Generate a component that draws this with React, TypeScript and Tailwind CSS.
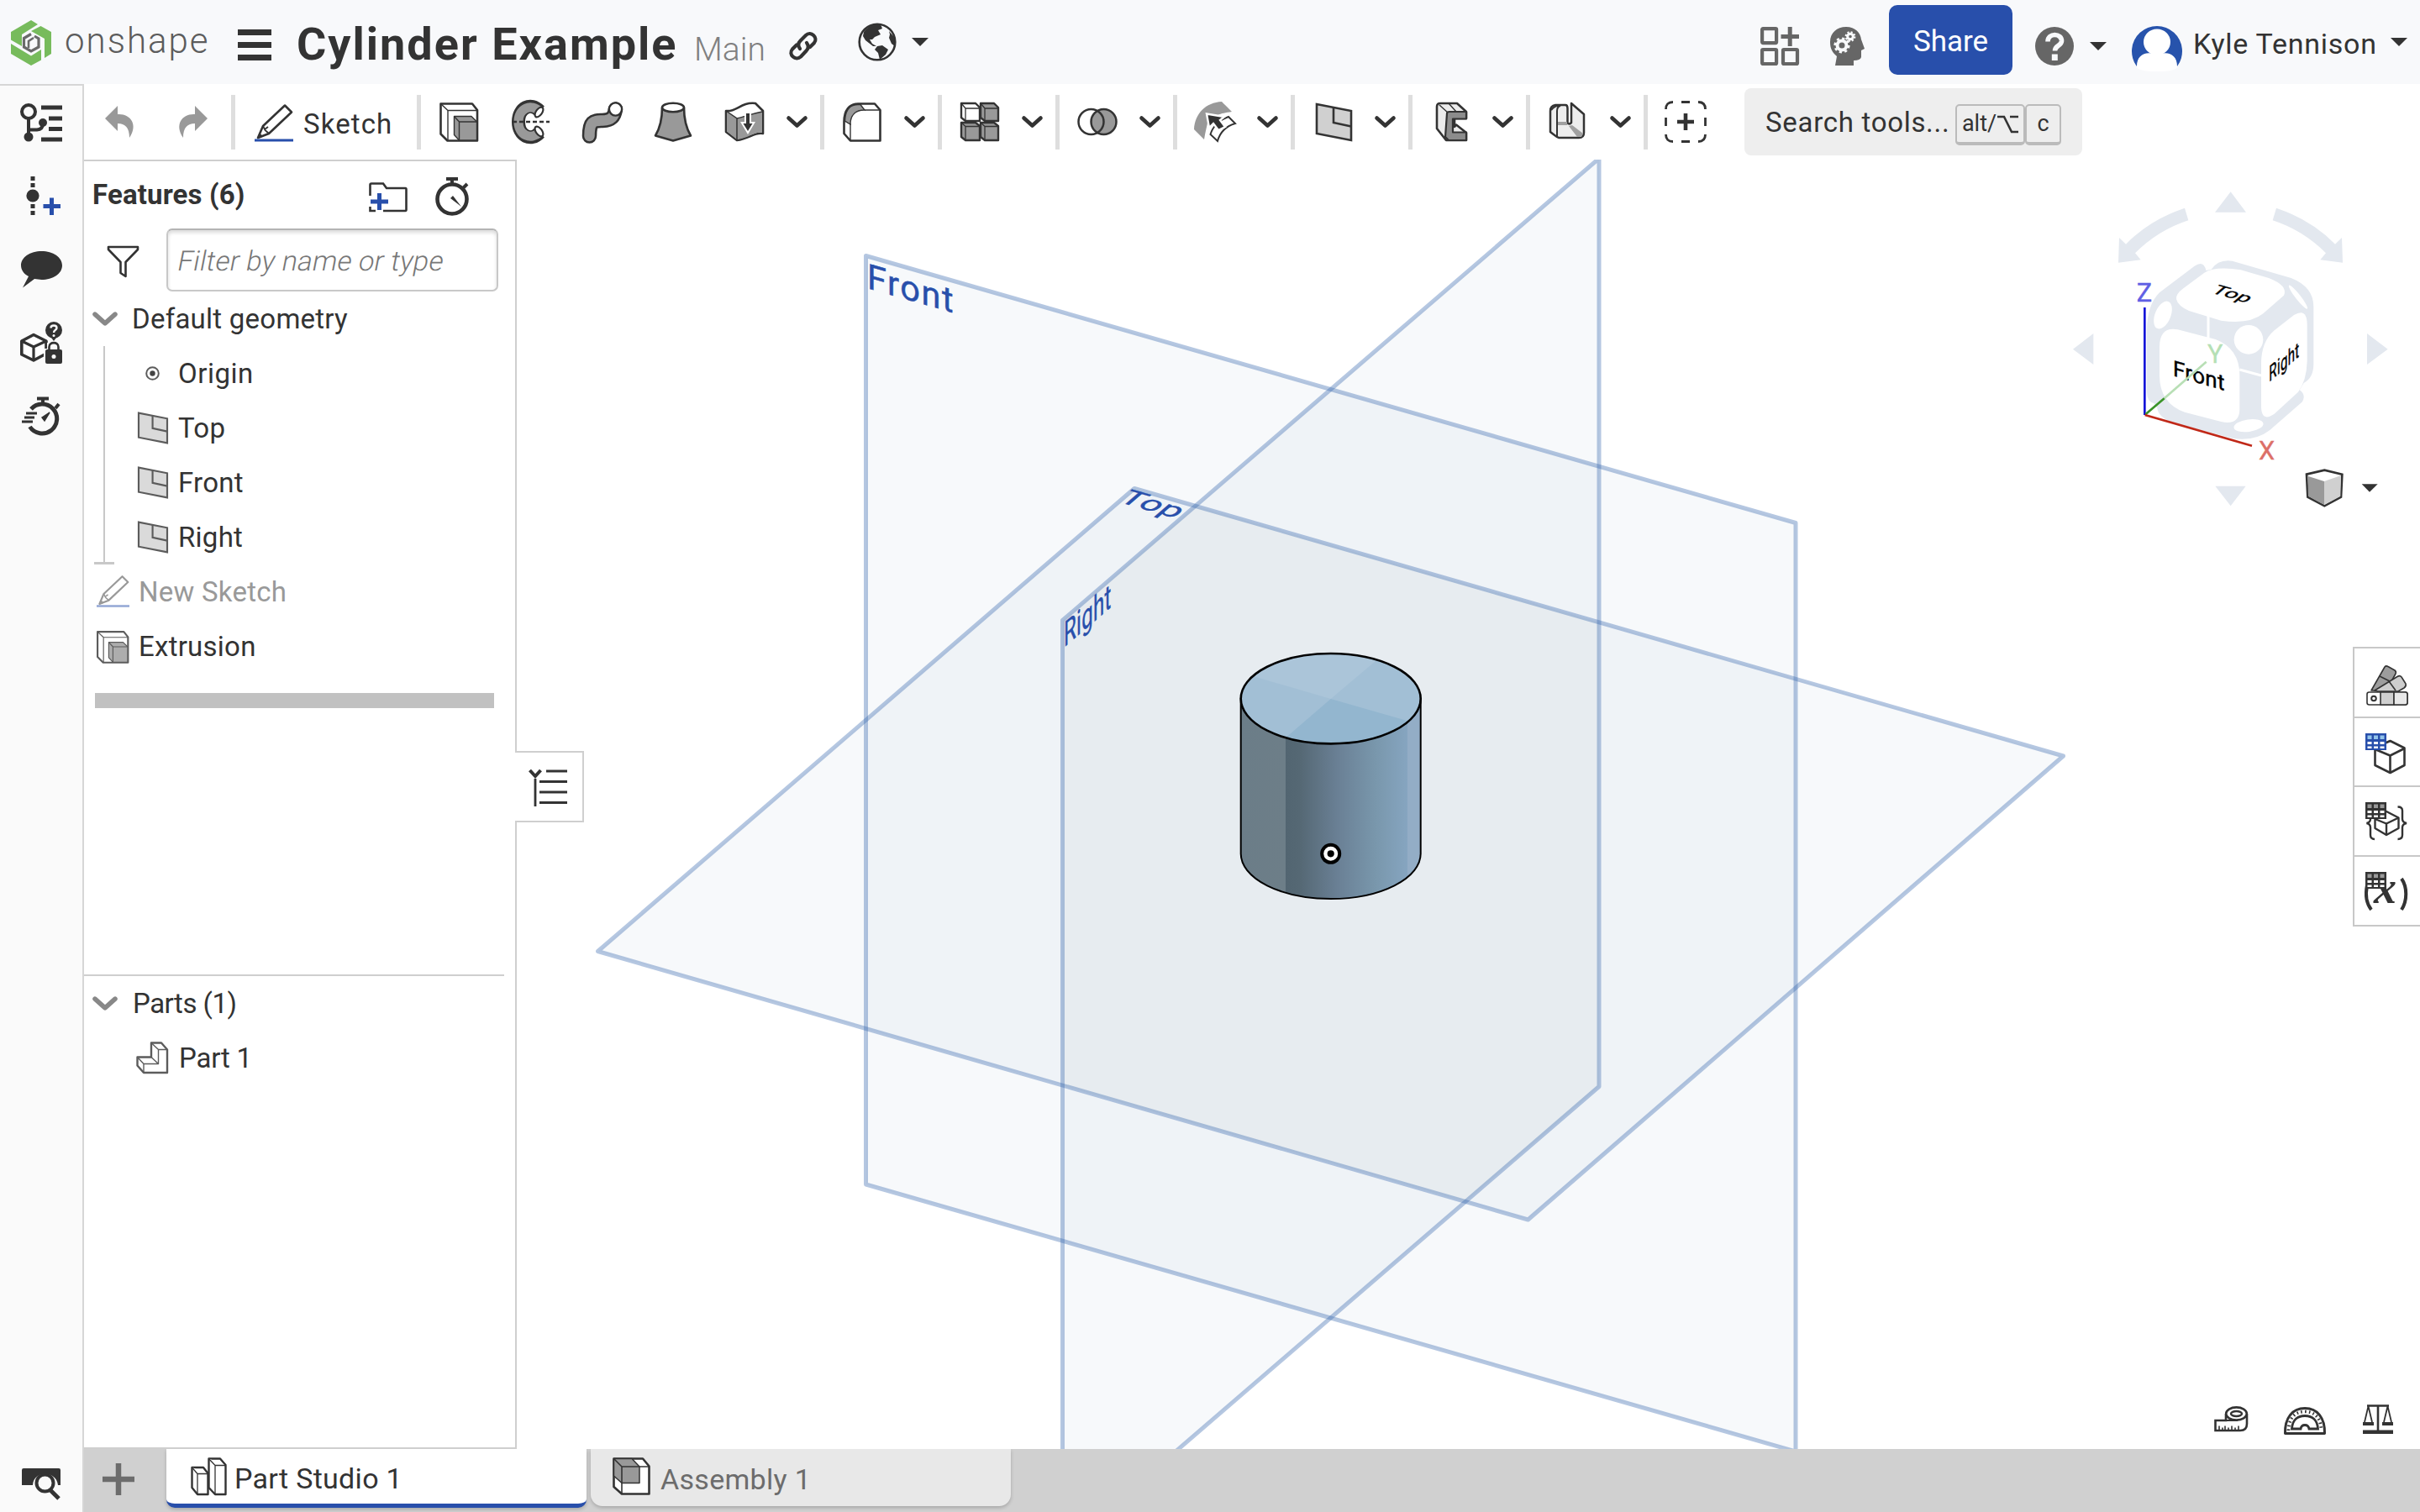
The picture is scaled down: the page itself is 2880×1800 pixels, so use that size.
import React from "react";

type IconProps = { w: number; h: number; vb?: string; className?: string; children: React.ReactNode };

function Icon({ w, h, vb, className = "", children }: IconProps) {
  return (
    <svg width={w} height={h} viewBox={vb ?? `0 0 ${w} ${h}`} fill="none" className={`shrink-0 overflow-visible ${className}`}>
      {children}
    </svg>
  );
}

const INK = "#333333";
const MID = "#999999";

function Caret({ className = "" }: { className?: string }) {
  return (
    <Icon w={20} h={10} className={className}>
      <path d="M0 0H20L10 10Z" fill={INK} />
    </Icon>
  );
}

function Chevron({ color = INK, w = 25, h = 14 }: { color?: string; w?: number; h?: number }) {
  return (
    <Icon w={w} h={h} vb="0 0 25 14">
      <path d="M2.5 2.5L12.5 11.5L22.5 2.5" stroke={color} strokeWidth="4.6" strokeLinecap="round" strokeLinejoin="round" />
    </Icon>
  );
}

/* ---------- toolbar icons, 48 x 48 box ---------- */

function ExtrudeArt({ ink = INK, fill = MID, sw = 2.6 }: { ink?: string; fill?: string; sw?: number }) {
  return (
    <g strokeLinejoin="round">
      <path d="M2.5 2.5H40L46 10V46.500H10.500L2.500 38.500Z" fill="#fff" stroke={ink} strokeWidth={sw} />
      <path d="M2.500 2.500L11 10.500H46M11 10.500V46" stroke={ink} strokeWidth="1.4" />
      <path d="M18.500 17.500H39L45.500 24V46H24.500L18.500 39.500Z" fill={fill} stroke={ink} strokeWidth="1.4" />
      <path d="M18.500 17.500L24.500 24H45.500M24.500 24V46" stroke={ink} strokeWidth="1.4" />
    </g>
  );
}

function PencilArt({ ink = INK, line = "#284fab" }: { ink?: string; line?: string }) {
  return (
    <g>
      <path d="M4 40L10 26L36 1.500L44 9.500L17 35Z" stroke={ink} strokeWidth="2.600" strokeLinejoin="round" fill="#fff" />
      <path d="M10 26L12.500 31L17 35M12 30L16 27" stroke={ink} strokeWidth="1.800" />
      <path d="M3.500 41L6 34.500L10.500 38.500Z" fill={ink} />
      <path d="M0 43H46" stroke={line} strokeWidth="3" />
    </g>
  );
}

function PlaneArt({ ink = INK, fill = "#d0d0d0", sw = 2.6 }: { ink?: string; fill?: string; sw?: number }) {
  return (
    <g stroke={ink} strokeWidth={sw}>
      <path d="M2 2L43 10V45L2 37Z" fill={fill} />
      <path d="M22 6V24L43 28.500" />
    </g>
  );
}

const RevolveIcon = () => (
  <Icon w={48} h={48} className="ml-[3px]">
    <path d="M34 11C24 0 9 7 9 24C9 41 24 48 34 37" stroke={INK} strokeWidth="16" />
    <path d="M35 12.500C24 1 9 8 9 24C9 40 24 47 35 35.500" stroke={MID} strokeWidth="11" />
    <ellipse cx="33.500" cy="12.500" rx="3.600" ry="6.800" transform="rotate(36 33.500 12.500)" fill="#fff" stroke={INK} strokeWidth="2.200" />
    <ellipse cx="33.500" cy="35.500" rx="3.600" ry="6.800" transform="rotate(-36 33.500 35.500)" fill="#fff" stroke={INK} strokeWidth="2.200" />
    <path d="M2 24H46" stroke={INK} strokeWidth="2.600" strokeDasharray="5 3" />
  </Icon>
);

const SweepIcon = () => (
  <Icon w={50} h={50} className="mt-[2px] ml-[3px]">
    <path d="M9.500 41C9.500 22 15 23 25 22.500C36 22 39 18 40.500 9" stroke={INK} strokeWidth="17.500" strokeLinecap="round" />
    <path d="M9.500 41C9.500 22 15 23 25 22.500C36 22 39 18 40.500 9" stroke={MID} strokeWidth="12.500" strokeLinecap="round" />
    <circle cx="40.500" cy="9" r="7.600" fill="#fff" stroke={INK} strokeWidth="2.400" />
  </Icon>
);

const LoftIcon = () => (
  <Icon w={48} h={48}>
    <path d="M11 7C11 22 8 32 3 40.500L24 46.500L45 40.500C40 32 37 22 37 7" fill={MID} stroke={INK} strokeWidth="2.600" strokeLinejoin="round" />
    <ellipse cx="24" cy="7" rx="13" ry="5.200" fill="#fff" stroke={INK} strokeWidth="2.600" />
  </Icon>
);

const SplitIcon = () => (
  <Icon w={48} h={48}>
    <path d="M2 11C14 13 20 0 37 2L46 11V38C36 36 30 44 15 46L2 36Z" fill="#fff" stroke={INK} strokeWidth="2.600" strokeLinejoin="round" />
    <path d="M3 12L15 20C24 18 32 14 45 12V37C36 35 30 43 15 45L3 35.500Z" fill={MID} />
    <path d="M2 11L15 20V46M15 20C24 18 30 15 45 12" stroke={INK} strokeWidth="1.500" />
    <path d="M28 14V26" stroke="#fff" strokeWidth="8" />
    <path d="M19 24H37L28 39Z" fill="#fff" />
    <path d="M28 14V28" stroke={INK} strokeWidth="4" />
    <path d="M22.500 26H33.500L28 35Z" fill={INK} />
  </Icon>
);

const FilletIcon = () => (
  <Icon w={48} h={48}>
    <path d="M2.500 24C2.500 10 9 2.500 19 2.500H39L45.500 10V46.500H10L2.500 38Z" fill="#fff" stroke={INK} strokeWidth="2.600" strokeLinejoin="round" />
    <path d="M3.500 23C4 10 10 3.500 19 3.500H22L27 10C16 10 10 16 10 27Z" fill={MID} stroke={INK} strokeWidth="1.400" />
    <path d="M27 10H45M10 26V46" stroke={INK} strokeWidth="1.400" />
  </Icon>
);

const PatternIcon = () => (
  <Icon w={48} h={48}>
    <g strokeLinejoin="round" stroke={INK} strokeWidth="2.400">
      <path d="M2 2H19L24 7V23H7L2 19Z" fill="#fff" />
      <path d="M25 2H41L46 7V23H30L25 19Z" fill={MID} />
      <path d="M2 25H19L24 29V46H7L2 42Z" fill={MID} />
      <path d="M25 25H41L46 29V46H30L25 42Z" fill={MID} />
      <path d="M2 2L7 8H24M7 8V23M25 2L30 8H46M30 8V23M2 25L7 29.500H24M7 29.500V46M25 25L30 29.500H46M30 29.500V46" strokeWidth="1.300" />
    </g>
  </Icon>
);

const BooleanIcon = () => (
  <Icon w={48} h={48}>
    <circle cx="31.500" cy="24" r="15" fill={MID} />
    <circle cx="16.500" cy="24" r="15" stroke={INK} strokeWidth="2.500" />
    <circle cx="31.500" cy="24" r="15" stroke={INK} strokeWidth="2.500" />
  </Icon>
);

const ModifyIcon = () => (
  <Icon w={50} h={48}>
    <path d="M33 0Q36 3 45 12C37 13 33 14 28 16L16 14C18 22 15 28 12 45L0 33C1 14 14 1 33 0Z" fill={MID} />
    <path d="M41 18L49 26C39 29 31 36 28 47L19.500 39C22 30 30 22 41 18Z" fill="#fff" stroke={INK} strokeWidth="2" />
    <path d="M15 14.500L36 18L31 22L37 30L29 34L23 26L18 31Z" fill={INK} stroke="#fff" strokeWidth="2.400" />
  </Icon>
);

const FrameIcon = () => (
  <Icon w={40} h={48} className="ml-[4px]">
    <path d="M2 6Q2 2 6 2H26L37 12V20H23V30L25 27.500L37 37V46H13L2 32Z" fill="#ececec" stroke={INK} strokeWidth="2.600" strokeLinejoin="round" />
    <path d="M14 14Q14 12 17 12H37V20.500H21V36.500H37V46H16L12 42Z" fill="#8c8c8c" stroke={INK} strokeWidth="2.200" strokeLinejoin="round" />
    <path d="M5 4L15 13M16 2L25 12" stroke={INK} strokeWidth="1.400" />
  </Icon>
);

const SheetIcon = () => (
  <Icon w={44} h={46} className="mr-[3px]">
    <path d="M2 10Q2 4 8 3H20Q22.500 3 22.500 7V24Q24 27 27 24V1L42 14V36Q42 42 36 42H12Q8 40 2 35Z" fill="#ededed" stroke={INK} strokeWidth="2.500" strokeLinejoin="round" />
    <path d="M10 23H22V27H10ZM28 27L41 37L39 41H34L24 28Z" fill="#a0a0a0" />
    <path d="M3 9Q8 3 14 4Q10 5 10 10V40" stroke={INK} strokeWidth="2" />
  </Icon>
);

const AddToolIcon = () => (
  <Icon w={50} h={50}>
    <g stroke={INK} strokeWidth="2.800">
      <path d="M1.500 10Q1.500 1.500 10 1.500M40 1.500Q48.500 1.500 48.500 10M48.500 40Q48.500 48.500 40 48.500M10 48.500Q1.500 48.500 1.500 40" />
      <path d="M20 1.500H30M20 48.500H30M1.500 20V30M48.500 20V30" />
    </g>
    <path d="M15 25H35M25 15V35" stroke={INK} strokeWidth="4.600" />
  </Icon>
);

function ToolGroup({ children }: { children: React.ReactNode }) {
  return (
    <div className="flex h-[65px] w-[140px] shrink-0 items-center border-l-[5px] border-[#dedede] pr-[10px]">
      <div className="flex w-[90px] items-center justify-center">{children}</div>
      <div className="flex w-[35px] justify-center"><Chevron /></div>
    </div>
  );
}

const Separator = () => <div className="h-[65px] w-[5px] shrink-0 bg-[#dedede]" />;

/* ---------- header ---------- */

function Header() {
  return (
    <header className="flex h-[100px] shrink-0 items-start bg-[#f8f9fb] whitespace-nowrap text-[#333]">
      <Icon w={48} h={54} className="ml-[13px] mt-[24px]">
        <path d="M24 0L32 5L13 17V31L0 23.500V14Z" fill="#77bb5c" />
        <path d="M35.500 7L48 14V40L40 45V22L24 13Z" fill="#77bb5c" />
        <path d="M0 28L24 42.500L36 35V47.500L24 54L0 40Z" fill="#77bb5c" />
        <path d="M24 16.500L15.500 21.500V32L24 37L33 32V22L28 19" stroke="#6a6a6a" strokeWidth="3.200" />
        <path d="M21 33V25L27 21" stroke="#6a6a6a" strokeWidth="2.600" />
      </Icon>
      <div className="ml-[16px] mt-[24px] w-[180px] text-[42px] leading-[50px] font-light tracking-[2px] text-[#5c5c5c]">onshape</div>
      <div className="ml-[26px] mt-[35px] flex w-[40px] flex-col gap-[8px]">
        <div className="h-[7px] bg-[#333]" />
        <div className="h-[7px] bg-[#333]" />
        <div className="h-[7px] bg-[#333]" />
      </div>
      <h1 className="ml-[30px] mt-[23px] w-[458px] text-[54px] leading-[60px] font-bold tracking-[2px]">Cylinder Example</h1>
      <div className="ml-[15px] mt-[34px] w-[89px] text-[39px] leading-[50px] font-light text-[#808080]">Main</div>
      <Icon w={36} h={36} className="ml-[23px] mt-[37px]">
        <g stroke={INK} strokeWidth="4.200" strokeLinecap="round">
          <path d="M14 21C11 17 12 14 14.500 11.500L21 5C27 -1 36 8 31 14L26 19" />
          <path d="M22 14C25 18 24 21 21.500 23.500L15 30.500C9 36 -0.500 28 5 21.500L10 16.500" />
        </g>
      </Icon>
      <Icon w={46} h={46} className="ml-[47px] mt-[27px]">
        <circle cx="23" cy="23" r="21.300" stroke={INK} strokeWidth="2.600" />
        <path d="M7 11C12 4 20 1 27 2L29 7L24 9L27 14L20 17L17 20L14 20L17 25L22 28L18 28L9 21L6 16Z" fill={INK} />
        <path d="M23 28L29 27L36 32L33 38L26 44L24 36L20 32Z" fill={INK} />
        <path d="M37 10L43 17L44 28L40 25L37 18L38 14Z" fill={INK} />
      </Icon>
      <Caret className="ml-[18px] mt-[45px]" />

      <Icon w={46} h={46} className="ml-auto mt-[32px]">
        <g stroke="#666" strokeWidth="4.200">
          <rect x="2.100" y="2.100" width="17" height="17" rx="1" />
          <rect x="2.100" y="27" width="17" height="17" rx="1" />
          <rect x="27" y="27" width="17" height="17" rx="1" />
          <path d="M24.500 11.500H46M35.200 0V23" strokeWidth="5" />
        </g>
      </Icon>
      <Icon w={41} h={46} className="ml-[37px] mt-[32px]">
        <path d="M6 46L8 35C2 30 0 25 0 18C0 7 8 0 19 0C30 0 36 7 37 15L41 26L37 28V36Q36 40 28 40V46Z" fill="#666" />
        <circle cx="14" cy="22" r="5.500" stroke="#f8f9fb" strokeWidth="4" />
        <circle cx="14" cy="22" r="8.300" stroke="#f8f9fb" strokeWidth="2.600" strokeDasharray="3.200 3.300" />
        <circle cx="24" cy="11.500" r="3.300" stroke="#f8f9fb" strokeWidth="3" />
        <circle cx="24" cy="11.500" r="5.300" stroke="#f8f9fb" strokeWidth="2.200" strokeDasharray="2.100 2.060" />
      </Icon>
      <button className="ml-[29px] mt-[6px] h-[83px] w-[147px] shrink-0 rounded-[10px] bg-[#284fab] pt-[5px] text-[35px] text-white">Share</button>
      <Icon w={46} h={46} className="ml-[27px] mt-[32px]">
        <circle cx="23" cy="23" r="23" fill="#666" />
        <path d="M15 17.500C15 6.500 32 7.500 31.500 17C31 23 23.500 22 23.500 28.500" stroke="#f8f9fb" strokeWidth="5.600" />
        <rect x="19.800" y="32.500" width="7" height="7.500" fill="#f8f9fb" />
      </Icon>
      <Caret className="ml-[19px] mt-[50px]" />
      <Icon w={60} h={60} className="ml-[30px] mt-[25px]">
        <path d="M6 54A30 30 0 1 1 54 54Z" fill="#2753ac" />
        <ellipse cx="30" cy="25" rx="16" ry="15.500" fill="#fff" />
        <path d="M6 54C6 42 14 37 23 38.500H37C46 37 54 42 54 54Q54 60 30 60Q6 60 6 54Z" fill="#fff" />
      </Icon>
      <div className="ml-[13px] mt-[32px] w-[235px] text-[34px] leading-[40px] tracking-[0.75px]">Kyle Tennison</div>
      <Caret className="mr-[15px] mt-[45px]" />
    </header>
  );
}

/* ---------- left rail ---------- */

function Rail() {
  return (
    <nav className="flex w-[100px] shrink-0 flex-col border-t-2 border-r-2 border-[#d6d6d6] bg-[#fafafa]">
      <Icon w={50} h={46} className="ml-[24px] mt-[21px]">
        <circle cx="10" cy="10" r="8" stroke={INK} strokeWidth="4" />
        <circle cx="10" cy="40" r="5.500" fill={INK} />
        <circle cx="27" cy="23" r="5" fill={INK} />
        <path d="M10 18V40M10 31.500H20Q27 31 27 24" stroke={INK} strokeWidth="4" />
        <path d="M25 5H50M34 18H50M34 30.500H50M25 43H50" stroke={INK} strokeWidth="5" />
      </Icon>
      <Icon w={42} h={46} className="ml-[31px] mt-[41px]">
        <path d="M8 0V13M8 33V46" stroke={INK} strokeWidth="5" strokeDasharray="5 3" />
        <circle cx="8" cy="23" r="7.600" fill={INK} />
        <path d="M20.500 35.500H41M30.500 25.500V46" stroke="#284fab" strokeWidth="5" />
      </Icon>
      <Icon w={50} h={44} className="ml-[25px] mt-[43px]">
        <path d="M24.500 0C38 0 49 7 49 17C49 27 38 34 24.500 34L16 33L2 43.500L9 30C3 27 0 22 0 17C0 7 11 0 24.500 0Z" fill={INK} />
      </Icon>
      <Icon w={50} h={50} className="ml-[24px] mt-[40px]">
        <path d="M1.800 23L16 15.500L31 23V38L16 46L1.800 39Z" stroke={INK} strokeWidth="3.600" strokeLinejoin="round" fill="#fff" />
        <path d="M1.800 23L16 30L31 23M16 30V46" stroke={INK} strokeWidth="3.200" />
        <path d="M28 50V32H32V25H47V50Z" fill="#fafafa" />
        <circle cx="40" cy="10" r="10" fill={INK} />
        <path d="M36.500 7.500C36.500 3.500 43.500 3.500 43.500 7.500C43.500 10 40 9.500 40 13" stroke="#fafafa" strokeWidth="2.400" />
        <circle cx="40" cy="16.500" r="1.500" fill="#fafafa" />
        <path d="M37 19H43L40 23Z" fill={INK} />
        <rect x="30" y="33" width="20" height="17" rx="2" fill={INK} />
        <path d="M34.500 33V30C34.500 23.500 45.500 23.500 45.500 30V33" stroke={INK} strokeWidth="2.600" />
        <circle cx="40" cy="41.500" r="2.500" fill="#fafafa" />
      </Icon>
      <Icon w={46} h={46} className="ml-[26px] mt-[40px]">
        <path d="M11 14A17.500 17.500 0 1 1 9.500 35" stroke={INK} strokeWidth="5" />
        <path d="M18 1.500H32M25 1V8M40 13L44 8" stroke={INK} strokeWidth="4" />
        <path d="M24 24L33 18L27 28Z" fill={INK} stroke={INK} strokeWidth="1.500" />
        <path d="M5 19H18M3 24H15M0 29H13" stroke={INK} strokeWidth="2.800" />
      </Icon>
      <Icon w={46} h={38} className="mt-auto mb-[14px] ml-[26px]">
        <path d="M2 0H44Q46 0 46 2V20H43C41 2 14 2 13 20H0V2Q0 0 2 0Z" fill={INK} />
        <circle cx="27.500" cy="17.500" r="10" stroke={INK} strokeWidth="4" />
        <path d="M34 26L44 36" stroke={INK} strokeWidth="5" />
      </Icon>
    </nav>
  );
}

/* ---------- toolbar ---------- */

function Toolbar() {
  return (
    <div className="flex h-[90px] shrink-0 items-center bg-white pl-[25px] whitespace-nowrap text-[#333]">
      <Icon w={34} h={38}>
        <path d="M0 15L15 0V10C30 9 40 22 29 38C29 26 24 21 15 21V30Z" fill={MID} />
      </Icon>
      <Icon w={34} h={38} className="ml-[54px]">
        <path d="M34 15L19 0V10C4 9 -6 22 5 38C5 26 10 21 19 21V30Z" fill={MID} />
      </Icon>
      <div className="ml-[28px]"><Separator /></div>
      <Icon w={46} h={45} className="mt-[2px] ml-[23px]"><PencilArt /></Icon>
      <div className="ml-[12px] mt-[6px] w-[135px] text-[33px] leading-[40px] tracking-[1.1px]">Sketch</div>
      <Separator />
      <div className="ml-[2px] flex">
        <div className="flex w-[85px] items-center justify-center"><Icon w={48} h={48}><ExtrudeArt /></Icon></div>
        <div className="flex w-[85px] items-center justify-center"><RevolveIcon /></div>
        <div className="flex w-[85px] items-center justify-center"><SweepIcon /></div>
        <div className="flex w-[85px] items-center justify-center"><LoftIcon /></div>
        <div className="flex w-[85px] items-center justify-center"><SplitIcon /></div>
        <div className="mr-[7px] flex w-[41px] items-center justify-center"><Chevron /></div>
      </div>
      <ToolGroup><FilletIcon /></ToolGroup>
      <ToolGroup><PatternIcon /></ToolGroup>
      <ToolGroup><BooleanIcon /></ToolGroup>
      <ToolGroup><ModifyIcon /></ToolGroup>
      <ToolGroup><Icon w={45} h={47} className="ml-[2px]"><PlaneArt /></Icon></ToolGroup>
      <ToolGroup><FrameIcon /></ToolGroup>
      <ToolGroup><SheetIcon /></ToolGroup>
      <Separator />
      <div className="ml-[20px]"><AddToolIcon /></div>
      <div className="ml-[45px] flex h-[80px] w-[402px] items-center rounded-[8px] bg-[#eee] pl-[25px]">
        <div className="mt-[2px] w-[226px] text-[33px] tracking-[0.7px]">Search tools...</div>
        <kbd className="mt-[7px] flex h-[49px] w-[83px] items-center justify-center rounded-[5px] border-2 border-b-4 border-[#bbb] font-['Roboto',sans-serif] text-[27px]">
          alt/
          <svg width="25" height="22" viewBox="0 0 25 22" fill="none" className="mt-[1px] ml-[1px]">
            <path d="M0 2H8L17 20H25M15 2H25" stroke={INK} strokeWidth="2.600" />
          </svg>
        </kbd>
        <kbd className="mt-[7px] flex h-[49px] w-[43px] items-center justify-center rounded-[5px] border-2 border-b-4 border-[#bbb] font-['Roboto',sans-serif] text-[27px]">c</kbd>
      </div>
    </div>
  );
}

/* ---------- feature panel ---------- */

const Stopwatch = () => (
  <Icon w={41} h={46}>
    <circle cx="20" cy="26" r="17.500" stroke={INK} strokeWidth="4.600" />
    <path d="M13 2H27M20 2V9M33 13L38 8" stroke={INK} strokeWidth="4" />
    <path d="M18 25L21 22L31 35Z" fill={INK} />
  </Icon>
);

function PlaneRow({ name }: { name: string }) {
  return (
    <div className="flex h-[65px] items-center pl-[63px]">
      <Icon w={38} h={39} vb="0 0 45 47"><PlaneArt ink="#5c5c5c" fill="#dadada" /></Icon>
      <span className="ml-[11px]">{name}</span>
    </div>
  );
}

function FeaturePanel() {
  return (
    <aside className="relative flex w-[515px] shrink-0 flex-col border-2 border-l-0 border-[#cfcfcf] bg-white text-[33px] leading-[40px] tracking-[0.25px] whitespace-nowrap text-[#333]">
      <div className="flex h-[80px] items-center pl-[10px]">
        <div className="w-[329px] font-bold tracking-[0.15px]">Features (6)</div>
        <Icon w={46} h={36} className="mt-[5px]">
          <path d="M1.500 16V3Q1.500 1.500 3 1.500H17L21 7H43.500Q44.500 7 44.500 8.500V32.500Q44.500 34 43.500 34H17M8 34H1.500V29" stroke={INK} strokeWidth="2.600" />
          <path d="M2 23H23M12.500 13V33" stroke="#284fab" strokeWidth="5" />
        </Icon>
        <div className="ml-[33px] mt-[3px]"><Stopwatch /></div>
      </div>
      <div className="flex h-[75px] items-center">
        <Icon w={39} h={39} className="ml-[27px] mt-[4px]">
          <path d="M2 2H37V5L22.500 20V37L16.500 33V20L2 5Z" stroke={INK} strokeWidth="2.600" strokeLinejoin="round" />
        </Icon>
        <div className="ml-[32px] flex h-[75px] w-[395px] items-center rounded-[7px] border-2 border-[#c8c8c8] border-t-[#b4b4b4] pt-[2px] pl-[12px] font-light tracking-[0.2px] text-[#777] shadow-[inset_0_3px_4px_rgba(0,0,0,0.14)]">
          <span className="inline-block -skew-x-[11deg]">Filter by name or type</span>
        </div>
      </div>
      <div className="flex h-[65px] items-center pl-[10px]">
        <Chevron color="#888" w={30} h={17} />
        <span className="ml-[17px]">Default geometry</span>
      </div>
      <div className="relative">
        <div className="absolute top-0 left-[23px] h-[260px] w-[2px] bg-[#c8c8c8]" />
        <div className="absolute top-[257px] left-[12px] h-[3px] w-[24px] bg-[#c8c8c8]" />
        <div className="flex h-[65px] items-center pl-[73px]">
          <Icon w={17} h={17}>
            <circle cx="8.500" cy="8.500" r="7.300" stroke="#5c5c5c" strokeWidth="2" />
            <circle cx="8.500" cy="8.500" r="3.200" fill="#444" />
          </Icon>
          <span className="ml-[22px] tracking-[0.5px]">Origin</span>
        </div>
        <PlaneRow name="Top" />
        <PlaneRow name="Front" />
        <PlaneRow name="Right" />
      </div>
      <div className="flex h-[65px] items-center pl-[15px] text-[#999]">
        <Icon w={39} h={39} vb="0 0 46 46"><PencilArt ink="#999" line="#93a7d5" /></Icon>
        <span className="ml-[11px]">New Sketch</span>
      </div>
      <div className="flex h-[65px] items-center pl-[14px]">
        <Icon w={40} h={40} vb="0 0 48 48"><ExtrudeArt ink="#5c5c5c" fill="#adadad" /></Icon>
        <span className="ml-[11px]">Extrusion</span>
      </div>
      <div className="mt-[23px] ml-[13px] h-[18px] w-[475px] bg-[#c1c1c1]" />
      <div className="mt-[317px] h-[2px] w-[500px] bg-[#cfcfcf]" />
      <div className="flex h-[65px] items-center pl-[10px]">
        <Chevron color="#888" w={30} h={17} />
        <span className="ml-[18px] tracking-[-0.5px]">Parts (1)</span>
      </div>
      <div className="flex h-[65px] items-center pl-[62px]">
        <Icon w={39} h={39}>
          <g stroke="#5c5c5c" strokeLinejoin="round">
            <path d="M1.500 18.500H18V1.500H30L37 9.500V37H9L1.500 28.500Z" fill="#fff" strokeWidth="2.400" />
            <path d="M1.500 18.500L9 26.500V37M9 26.500H26.500V9.500H37M18 1.500L26.500 9.500M18 18.500L26.500 26.500" strokeWidth="1.400" />
          </g>
        </Icon>
        <span className="ml-[12px] tracking-[-0.2px]">Part 1</span>
      </div>
      <div className="absolute top-[702px] left-[513px] z-10 flex h-[85px] w-[82px] items-center justify-center border-2 border-l-0 border-[#cfcfcf] bg-white pt-[3px] pr-[3px]">
        <Icon w={46} h={46}>
          <path d="M1.500 2L8 9L14.500 2" stroke={INK} strokeWidth="4" />
          <path d="M8 12V45M21 3H46M13 15.500H46M13 28H46M13 40.500H46" stroke={INK} strokeWidth="2.800" />
        </Icon>
      </div>
    </aside>
  );
}

/* ---------- 3D viewport ---------- */

const FRONT = "1030.500,304.500 2137,622.500 2137,1728 1030.500,1410";
const TOP = "1350,581.500 2455.500,900 1818.500,1452 711.500,1132.500";
const RIGHT = "1264.500,738.500 1903,188.500 1903,1293.500 1264.500,1844";

function Scene() {
  return (
    <svg width="2265" height="1535" viewBox="615 190 2265 1535" fill="none" className="block">
      <defs>
        <linearGradient id="body" gradientUnits="userSpaceOnUse" x1="1476" y1="0" x2="1691" y2="0">
          <stop offset="0" stopColor="#6b7d88" />
          <stop offset="0.250" stopColor="#6d7e88" />
          <stop offset="0.250" stopColor="#526571" />
          <stop offset="0.330" stopColor="#556874" />
          <stop offset="0.540" stopColor="#6a8095" />
          <stop offset="0.750" stopColor="#7997ac" />
          <stop offset="0.925" stopColor="#86a5c0" />
          <stop offset="0.925" stopColor="#93adc6" />
          <stop offset="1" stopColor="#93adc6" />
        </linearGradient>
        <clipPath id="cap"><ellipse cx="1583.700" cy="831.700" rx="107" ry="53.700" /></clipPath>
        <clipPath id="inFront"><polygon points={FRONT} /></clipPath>
        <clipPath id="inTop"><polygon points={TOP} /></clipPath>
      </defs>
      <g fill="#5f83b0" fillOpacity="0.050">
        <polygon points={FRONT} />
        <polygon points={TOP} />
        <polygon points={RIGHT} />
      </g>
      <g clipPath="url(#inFront)">
        <g clipPath="url(#inTop)">
          <polygon points={RIGHT} fill="#e7ecf0" />
        </g>
      </g>
      <g stroke="#3766ae" strokeOpacity="0.370" strokeWidth="5" strokeLinejoin="round">
        <polygon points={FRONT} />
        <polygon points={TOP} />
        <polygon points={RIGHT} />
      </g>
      <g fill="#284fab" stroke="#284fab" strokeWidth="0.500" fontFamily="Roboto, sans-serif" fontSize="48">
        <text transform="matrix(0.866 0.249 0 0.866 1032 343)" letterSpacing="1.8">Front</text>
        <text transform="matrix(0.866 0.250 -0.500 0.432 1329 597)">Top</text>
        <text transform="matrix(0.500 -0.430 0 0.866 1266 771)" letterSpacing="0.6">Right</text>
      </g>
      <path d="M1476.700 831.700V1016.300A107 53.700 0 0 0 1690.700 1016.300V831.700Z" fill="url(#body)" stroke="#000" strokeWidth="2" />
      <g clipPath="url(#cap)">
        <rect x="1470" y="770" width="230" height="120" fill="#a2bfd5" />
        <path d="M1583.700 832L1440 790V700H1740Z" fill="#abc5d9" />
        <path d="M1583.700 832L1440 956V1000H1800V894Z" fill="#93b6cf" />
      </g>
      <ellipse cx="1583.700" cy="831.700" rx="107" ry="53.700" stroke="#000" strokeWidth="2.600" />
      <circle cx="1583.700" cy="1016.300" r="12.500" fill="#000" />
      <circle cx="1583.700" cy="1016.300" r="6.300" fill="#000" stroke="#fff" strokeWidth="4.400" />
    </svg>
  );
}

function ViewCube() {
  return (
    <svg width="440" height="420" viewBox="0 0 1320 1260" fill="none" className="absolute top-[10px] right-0">
      <g fill="#e3e8ef">
        <path d="M644 85L699 158H588ZM81 647L154 591V702ZM1205 647L1131 591V702ZM644 1207L589 1136H698Z" />
        <path d="M480 143L493 187Q385 222 303 304L323 328L243 338L246 249L270 272Q355 185 480 143Z" />
        <path d="M807 143L794 187Q902 222 984 304L964 328L1044 338L1041 249L1017 272Q932 185 807 143Z" />
        <path d="M345 580Q345 490 390 445L515 350Q548 328 556 366L575 362Q600 325 650 332L860 393Q940 425 940 495V700Q940 750 905 768L890 793Q914 810 900 835L785 935Q730 978 650 965L440 910Q385 890 382 857L370 840Q345 835 345 800Z" />
      </g>
      <g fill="#fff">
        <path d="M450 468Q448 450 475 430L550 374Q590 350 680 364L780 393Q850 420 834 455L760 520Q710 560 610 545L495 510Q455 492 450 468Z" />
        <path d="M390 640Q390 565 455 577L590 612Q676 645 676 740V860Q676 920 610 906L480 872Q390 840 390 740Z" />
        <path d="M753 700Q753 620 800 580L870 525Q917 497 917 560V690Q915 760 885 800L800 878Q753 910 753 850Z" />
        <ellipse cx="402" cy="525" rx="28" ry="52" transform="rotate(22 402 525)" />
        <circle cx="708" cy="613" r="52" />
        <ellipse cx="708" cy="920" rx="53" ry="22" transform="rotate(-8 708 920)" />
        <ellipse cx="885" cy="461" rx="53" ry="9" transform="rotate(52 885 461)" />
      </g>
      <path d="M564 525V606M676 720L753 741" stroke="#fff" strokeWidth="9" />
      <g fill="#000" stroke="#000" strokeWidth="1.500" fontFamily="Roboto, sans-serif" fontSize="90">
        <text transform="matrix(0.866 0.249 0 0.866 438 742)" letterSpacing="1">Front</text>
        <text transform="matrix(0.866 0.250 -0.500 0.432 570 444)">Top</text>
        <text transform="matrix(0.500 -0.430 0 0.866 781 765)" letterSpacing="2">Right</text>
      </g>
      <path d="M337 498V882" stroke="#1414d8" strokeWidth="8" />
      <path d="M407 823L557 692" stroke="#b8dfb5" strokeWidth="8" />
      <path d="M340 880L407 823" stroke="#3a9428" strokeWidth="8" />
      <path d="M338 882L720 992" stroke="#c02818" strokeWidth="8" />
      <g fontFamily="Roboto, sans-serif" fontSize="92" textAnchor="middle" strokeWidth="1">
        <text x="336" y="478" fill="#6060e4" stroke="#6060e4">Z</text>
        <text x="589" y="696" fill="#b5e0b5" stroke="#b5e0b5">Y</text>
        <text x="773" y="1040" fill="#dc7068" stroke="#dc7068">X</text>
      </g>
      <path d="M915 1094L979 1079L1042 1094L1038 1175L979 1207L919 1175Z" fill="#fff" stroke={INK} strokeWidth="8" />
      <path d="M919 1100L978 1119V1203L921 1172Z" fill="#999" />
      <path d="M1038 1098L978 1119V1203L1036 1172Z" fill="#d0d0d0" />
      <path d="M1112 1129H1169L1140 1157Z" fill={INK} />
    </svg>
  );
}

function TableGlyph({ ink, head }: { ink: string; head: string }) {
  return (
    <g>
      <rect width="25" height="20" fill={ink} />
      <path d="M2.500 2.500H7.500V7H2.500ZM10 2.500H15V7H10ZM17.500 2.500H22.500V7H17.500Z" fill={head} />
      <path d="M2.500 10H7.500V13H2.500ZM10 10H15V13H10ZM17.500 10H22.500V13H17.500ZM2.500 15.500H7.500V18H2.500ZM10 15.500H15V18H10ZM17.500 15.500H22.500V18H17.500Z" fill="#fff" />
    </g>
  );
}

function SideTabs() {
  return (
    <div className="absolute top-[580px] right-0 w-[80px] border-t-2 border-l-2 border-[#c8c8c8] bg-white">
      <div className="flex h-[83px] items-center justify-center border-b-2 border-[#c8c8c8]">
        <Icon w={50} h={48} className="mt-[7px]">
          <g stroke={INK} strokeWidth="1.600" strokeLinejoin="round">
            <path d="M6 30L22 2Q23.500 0 26 1.500L34 6Q36 7.500 35 10L24 30Z" fill="#9d9d9d" />
            <path d="M16 13L28 19" />
            <path d="M10 30L37 13.500Q40 11.500 42 14L47 22Q48 25 45 27L38 31H14Z" fill="#cdcdcd" />
            <path d="M27 19L35 30" />
            <rect x="1" y="32" width="48" height="15" rx="2.500" fill="#fff" />
            <path d="M17 32H33V47H17Z" fill="#cfcfcf" />
            <path d="M33 32H46.500Q49 32 49 34.500V44.500Q49 47 46.500 47H33Z" fill="#e8e8e8" />
            <circle cx="9" cy="39.500" r="2.800" strokeWidth="2" />
          </g>
        </Icon>
      </div>
      <div className="flex h-[82px] items-center justify-center border-b-2 border-[#c8c8c8] pr-[2px]">
        <Icon w={50} h={48} className="mt-[4px]">
          <path d="M11.500 17L29.500 9L46.500 17.500V38L29.500 47L11.500 38Z" stroke={INK} strokeWidth="2.600" fill="#fff" strokeLinejoin="round" />
          <path d="M11.500 19L29.500 26.500L46.500 18M29.500 26.500V47" stroke={INK} strokeWidth="2.600" />
          <TableGlyph ink="#284fab" head="#93c4ea" />
        </Icon>
      </div>
      <div className="flex h-[83px] items-center justify-center border-b-2 border-[#c8c8c8] pr-[2px]">
        <Icon w={50} h={46}>
          <path d="M11.500 18L25 11L39.500 18.500V31L25 39L11.500 31Z" stroke={INK} strokeWidth="2.400" fill="#fff" strokeLinejoin="round" />
          <path d="M11.500 20L25 25.500L39.500 18.500M25 25.500V39" stroke={INK} strokeWidth="2.400" />
          <path d="M11 44Q6 44 6 39V30Q6 26 1.500 25Q6 24 6 20M38.500 5.500Q44 5.500 44 10V20Q44 24 49 25Q44 26 44 30V39Q44 44 38.500 44" stroke={INK} strokeWidth="2.400" />
          <TableGlyph ink={INK} head={MID} />
        </Icon>
      </div>
      <div className="flex h-[83px] items-center justify-center border-b-2 border-[#c8c8c8] pr-[2px]">
        <Icon w={50} h={46}>
          <path d="M7 45C0 36 0 26 2 16M43 8C50 18 50 34 43 45" stroke={INK} strokeWidth="4" />
          <text x="10" y="37" fontFamily="'Liberation Serif', serif" fontStyle="italic" fontWeight="700" fontSize="54" fill={INK}>x</text>
          <TableGlyph ink={INK} head={MID} />
        </Icon>
      </div>
    </div>
  );
}

function MeasureBar() {
  return (
    <div className="absolute right-[32px] bottom-[17px] flex items-end">
      <Icon w={40} h={31} className="mb-[3px]">
        <path d="M14 9V17H1.500V29H31Q39 29 39 21V9" fill="#fff" stroke={INK} strokeWidth="2.600" />
        <path d="M14 17H28" stroke={INK} strokeWidth="2" />
        <ellipse cx="26.500" cy="9" rx="12.300" ry="7.600" fill="#fff" stroke={INK} strokeWidth="2.600" />
        <ellipse cx="26.500" cy="9" rx="6.500" ry="3" fill="#fff" stroke={INK} strokeWidth="2.400" />
        <path d="M6 28V23.500M10 28V25.500M13 28V23.500M17 28V25.500M21 28V23.500M25 28V25.500M29 28V23.500" stroke={INK} strokeWidth="1.600" />
      </Icon>
      <Icon w={50} h={33} className="ml-[43px]">
        <path d="M1.500 31.500C1 13 10 1.500 25 1.500C40 1.500 49 13 48.500 31.500Z" fill="#fff" stroke={INK} strokeWidth="3" strokeLinejoin="round" />
        <path d="M5.500 28C6 12 14 5.500 25 5.500C36 5.500 44 12 44.500 28" stroke={INK} strokeWidth="3.600" strokeDasharray="1.600 3.200" />
        <path d="M9.500 26C10 15 17 10.500 25 10.500C33 10.500 40 15 40.500 26H30C29 20 21 20 20 26Z" fill="#fff" stroke={INK} strokeWidth="2.800" />
      </Icon>
      <Icon w={36} h={36} className="ml-[44px]">
        <path d="M5 1.500H31M18 1V32" stroke={INK} strokeWidth="2.600" />
        <path d="M6.500 2L2 21M6.500 2L11 21M29.500 2L25 21M29.500 2L34 21" stroke={INK} strokeWidth="1.800" />
        <path d="M0 21H13V25H0ZM23 21H36V25H23ZM0 30.500H36V35H0Z" fill={INK} />
      </Icon>
    </div>
  );
}

/* ---------- bottom tabs ---------- */

function BottomTabs() {
  return (
    <div className="flex h-[75px] shrink-0 items-start bg-[#d0d0d0] text-[34px] whitespace-nowrap">
      <Icon w={38} h={38} className="mt-[17px] ml-[22px]">
        <path d="M0 19H38M19 0V38" stroke="#6c6c6c" strokeWidth="6.500" />
      </Icon>
      <div className="ml-[38px] flex h-[70px] w-[500px] items-center rounded-b-[10px] border-b-[5px] border-[#284fab] bg-white pl-[29px] text-[#333] shadow-[0_2px_4px_rgba(0,0,0,0.2)]">
        <Icon w={43} h={45}>
          <g stroke={INK} strokeLinejoin="round" fill="#fff">
            <path d="M1.500 12H15L20.500 19V44H8L1.500 36Z" strokeWidth="2.400" />
            <path d="M1.500 12L8 19.500H20.500M8 19.500V44" strokeWidth="1.300" />
            <path d="M21.500 1.500H35L41.500 9V44H29L21.500 36Z" strokeWidth="2.400" />
            <path d="M21.500 1.500L29 9.500H41.500M29 9.500V44" strokeWidth="1.300" />
          </g>
        </Icon>
        <span className="ml-[9px] mt-[6px] tracking-[0.3px]">Part Studio 1</span>
      </div>
      <div className="ml-[5px] flex h-[68px] w-[500px] items-center rounded-b-[14px] bg-[#e8e8e8] pl-[26px] text-[#6c6c6c] shadow-[0_2px_4px_rgba(0,0,0,0.2)]">
        <Icon w={45} h={45} className="mb-[3px]">
          <g stroke={INK} strokeLinejoin="round">
            <path d="M1.500 1.500H36L43.500 10.500V43.500H11L1.500 35Z" fill="#fff" strokeWidth="2.600" />
            <path d="M1.500 1.500H23L32 11V30.500H11L1.500 22Z" fill={MID} strokeWidth="1.500" />
            <path d="M1.500 1.500L11 11H43.500M11 11V43" strokeWidth="1.600" />
          </g>
        </Icon>
        <span className="ml-[12px] mt-[5px] tracking-[0.3px]">Assembly 1</span>
      </div>
    </div>
  );
}

export default function App() {
  return (
    <div className="flex h-[1800px] w-[2880px] flex-col overflow-hidden bg-white font-['Roboto',sans-serif]">
      <Header />
      <div className="flex min-h-0 flex-1">
        <Rail />
        <div className="flex min-w-0 flex-1 flex-col">
          <Toolbar />
          <div className="flex min-h-0 flex-1">
            <FeaturePanel />
            <main className="relative flex-1 overflow-hidden bg-white">
              <Scene />
              <ViewCube />
              <SideTabs />
              <MeasureBar />
            </main>
          </div>
          <BottomTabs />
        </div>
      </div>
    </div>
  );
}
